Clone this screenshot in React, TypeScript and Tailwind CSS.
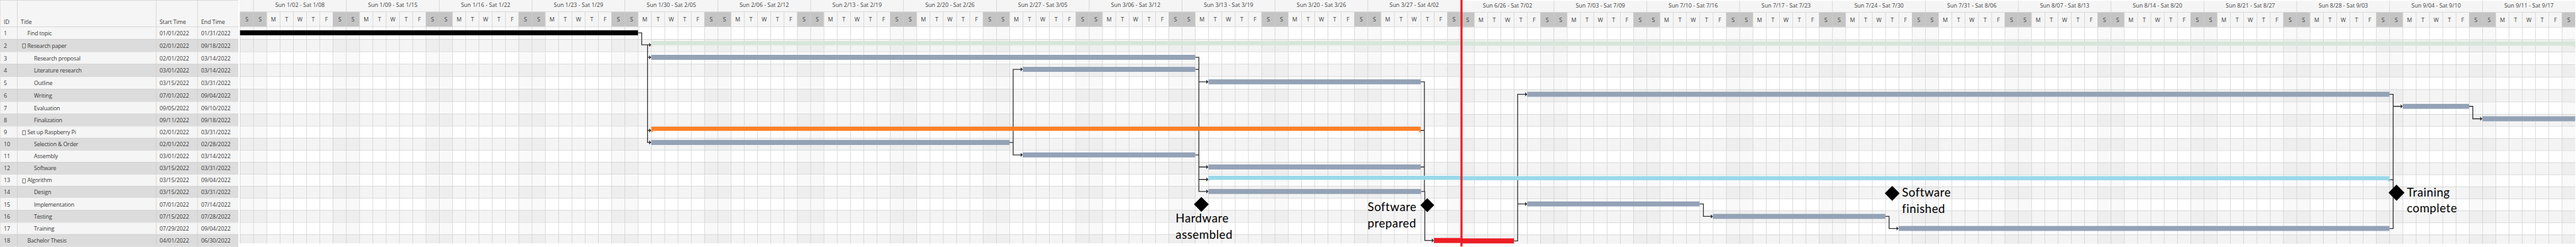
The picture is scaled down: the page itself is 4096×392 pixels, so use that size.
import React from "react";

type Task = { id: number; title: string; level: 1 | 2; group?: boolean; start: string; end: string };

const tasks: Task[] = [
  { id: 1, title: "Find topic", level: 1, start: "01/01/2022", end: "01/31/2022" },
  { id: 2, title: "Research paper", level: 1, group: true, start: "02/01/2022", end: "09/18/2022" },
  { id: 3, title: "Research proposal", level: 2, start: "02/01/2022", end: "03/14/2022" },
  { id: 4, title: "Literature research", level: 2, start: "03/01/2022", end: "03/14/2022" },
  { id: 5, title: "Outline", level: 2, start: "03/15/2022", end: "03/31/2022" },
  { id: 6, title: "Writing", level: 2, start: "07/01/2022", end: "09/04/2022" },
  { id: 7, title: "Evaluation", level: 2, start: "09/05/2022", end: "09/10/2022" },
  { id: 8, title: "Finalization", level: 2, start: "09/11/2022", end: "09/18/2022" },
  { id: 9, title: "Set up Raspberry Pi", level: 1, group: true, start: "02/01/2022", end: "03/31/2022" },
  { id: 10, title: "Selection & Order", level: 2, start: "02/01/2022", end: "02/28/2022" },
  { id: 11, title: "Assembly", level: 2, start: "03/01/2022", end: "03/14/2022" },
  { id: 12, title: "Software", level: 2, start: "03/15/2022", end: "03/31/2022" },
  { id: 13, title: "Algorithm", level: 1, group: true, start: "03/15/2022", end: "09/04/2022" },
  { id: 14, title: "Design", level: 2, start: "03/15/2022", end: "03/31/2022" },
  { id: 15, title: "Implementation", level: 2, start: "07/01/2022", end: "07/14/2022" },
  { id: 16, title: "Testing", level: 2, start: "07/15/2022", end: "07/28/2022" },
  { id: 17, title: "Training", level: 2, start: "07/29/2022", end: "09/04/2022" },
  { id: 18, title: "Bachelor Thesis", level: 1, start: "04/01/2022", end: "06/30/2022" },
];

const springWeeks = [
  "Sun 1/02 - Sat 1/08", "Sun 1/09 - Sat 1/15", "Sun 1/16 - Sat 1/22", "Sun 1/23 - Sat 1/29",
  "Sun 1/30 - Sat 2/05", "Sun 2/06 - Sat 2/12", "Sun 2/13 - Sat 2/19", "Sun 2/20 - Sat 2/26",
  "Sun 2/27 - Sat 3/05", "Sun 3/06 - Sat 3/12", "Sun 3/13 - Sat 3/19", "Sun 3/20 - Sat 3/26",
  "Sun 3/27 - Sat 4/02",
];

const summerWeeks = [
  "Sun 6/26 - Sat 7/02", "Sun 7/03 - Sat 7/09", "Sun 7/10 - Sat 7/16", "Sun 7/17 - Sat 7/23",
  "Sun 7/24 - Sat 7/30", "Sun 7/31 - Sat 8/06", "Sun 8/07 - Sat 8/13", "Sun 8/14 - Sat 8/20",
  "Sun 8/21 - Sat 8/27", "Sun 8/28 - Sat 9/03", "Sun 9/04 - Sat 9/10", "Sun 9/11 - Sat 9/17",
];

const WEEK = ["S", "M", "T", "W", "T", "F", "S"];

const rowHeight = (id: number) => (id < 8 ? "h-[30px]" : "h-[29px]");

function TaskTable() {
  return (
    <div className="flex w-[575px] shrink-0 flex-col border-l border-[#c8c8c8] text-[13.6px] leading-none text-[#3a3a3a]">
      <div className="flex h-[64px] items-end border-t border-[#c8c8c8] bg-[#f5f5f5]">
        <div className="flex h-full w-[40px] items-end pb-[5px] pl-[8px]">ID</div>
        <div className="flex h-full w-[335px] items-end border-l border-[#c8c8c8] pb-[5px] pl-[8px]">Title</div>
        <div className="flex h-full w-[100px] items-end border-l border-[#c8c8c8] pb-[5px] pl-[8px] tracking-[-0.15px]">Start Time</div>
        <div className="flex h-full w-[99px] items-end border-l border-[#c8c8c8] pb-[5px] pl-[8px] tracking-[-0.15px]">End Time</div>
      </div>
      {tasks.map((t) => (
        <div
          key={t.id}
          className={`flex ${rowHeight(t.id)} ${t.id === 15 ? "" : "border-t"} border-[#c8c8c8] ${
            t.id % 2 ? "bg-[#f5f5f5]" : "bg-[#dcdcdc]"
          }`}
        >
          <div className="flex w-[40px] items-center pl-[8px]">{t.id}</div>
          <div
            className={`flex w-[335px] items-center border-l border-[#c8c8c8] tracking-[-0.33px] ${
              t.group ? "pl-[12px]" : t.level === 1 ? "pl-[24px]" : "pl-[40px]"
            }`}
          >
            {t.group && <span className="mr-[4px] mt-[2px] h-[11px] w-[8px] border border-[#3a3a3a]" />}
            {t.title}
          </div>
          <div className="flex w-[100px] items-center border-l border-[#c8c8c8] pl-[8px] tracking-[-0.1px]">{t.start}</div>
          <div className="flex w-[99px] items-center border-l border-[#c8c8c8] pl-[8px] tracking-[-0.1px]">{t.end}</div>
        </div>
      ))}
      <div className="h-px bg-[#c8c8c8]" />
    </div>
  );
}

function Timeline({ weeks, leadIn, late }: { weeks: string[]; leadIn?: boolean; late?: boolean }) {
  const days = [...(leadIn ? ["S"] : []), ...weeks.flatMap(() => WEEK)];
  const weekend = (i: number) => {
    const d = leadIn ? i + 6 : i;
    return d % 7 === 0 || d % 7 === 6;
  };
  return (
    <div className={`flex shrink-0 flex-col text-[13.6px] leading-none text-[#444] ${late ? "pt-[2px]" : ""}`}>
      <div className={`flex bg-[#f5f5f5] ${late ? "h-[27px]" : "h-[28px]"}`}>
        {leadIn && <div className="w-[33px]" />}
        {weeks.map((w) => (
          <div
            key={w}
            className={`flex w-[224px] justify-center border-l border-[#c8c8c8] ${late ? "pt-[4px]" : "pt-[5px]"}`}
          >
            {w}
          </div>
        ))}
      </div>
      <div className="flex h-[36px] border-t border-[#c8c8c8] bg-[#f5f5f5]">
        {leadIn && <div className="w-px" />}
        {days.map((d, i) => (
          <div
            key={i}
            className={`flex w-[32px] items-center justify-center border-l border-[#c8c8c8] ${
              weekend(i) ? "bg-[#c4c4c4]" : ""
            }`}
          >
            {d}
          </div>
        ))}
      </div>
      {tasks.map((t) => (
        <div
          key={t.id}
          className={`flex border-t border-[#c8c8c8] ${t.id === 18 ? "h-[22px]" : rowHeight(t.id)} ${
            t.id % 2 ? "bg-white" : "bg-[#f4f4f4]"
          }`}
        >
          {leadIn && <div className="w-px" />}
          {days.map((_, i) => (
            <div
              key={i}
              className={`w-[32px] border-l border-[#c8c8c8] ${weekend(i) ? "bg-black/[0.022]" : ""}`}
            />
          ))}
        </div>
      ))}
    </div>
  );
}

const SLATE = "#94a2b6";

/* x1, x2, y, height, colour */
const bars: [number, number, number, number, string][] = [
  [579, 1539, 73, 12, "#000000"],
  [1571, 3523, 99, 10, "#d6e6da"],
  [3523, 6212, 100, 10, "#d6e6da"],
  [1571, 2883, 132, 12, SLATE],
  [2467, 2883, 161, 12, SLATE],
  [2915, 3427, 191, 12, SLATE],
  [3684, 5764, 221, 12, SLATE],
  [5796, 5956, 250, 12, SLATE],
  [5988, 6212, 280, 12, SLATE],
  [1571, 3427, 305, 10, "#ff7f27"],
  [1571, 2435, 337, 12, SLATE],
  [2467, 2883, 367, 12, SLATE],
  [2915, 3427, 396, 12, SLATE],
  [2915, 3523, 423, 10, "#99d9ea"],
  [3523, 5764, 424, 10, "#99d9ea"],
  [2915, 3428, 455, 12, SLATE],
  [3684, 4100, 485, 12, SLATE],
  [4132, 4548, 515, 12, SLATE],
  [4580, 5764, 544, 12, SLATE],
  [3459, 3523, 573, 12, "#ed1c24"],
  [3523, 3652, 574, 12, "#ed1c24"],
];

/* Pointed ends of the summary bars */
const hooks: [string, string][] = [
  ["M1571 109h5l-5 5z", "#d6e6da"],
  ["M6212 110h-6l6 5z", "#d6e6da"],
  ["M1571 315h5l-5 5z", "#ff7f27"],
  ["M3427 315h-5l5 5z", "#ff7f27"],
  ["M2915 433h5l-5 4z", "#99d9ea"],
  ["M5764 434h-5l5 5z", "#99d9ea"],
];

const links = [
  "M1539 79H1548V108H1567",
  "M1562 108V343H1567M1562 138H1567M1562 314H1567",
  "M2435 343H2444M2463 167H2444V373H2463",
  "M2883 138H2892V461H2911M2883 167H2892M2883 373H2892M2892 197H2911M2892 402H2911M2892 432H2911",
  "M3427 197H3436V461M3427 314H3436M3427 402H3436",
  "M3428 461H3437V579H3455",
  "M3652 580H3661V227H3680M3661 491H3680",
  "M4100 491H4109V521H4128",
  "M4548 521H4557V550H4576",
  "M5764 227H5773V550H5764M5764 433H5773M5773 256H5792",
  "M5956 256H5965V286H5984",
];

const arrows: [number, number][] = [
  [1571, 108], [1571, 138], [1571, 314], [1571, 343],
  [2467, 167], [2467, 373],
  [2915, 197], [2915, 402], [2915, 432], [2915, 461],
  [3459, 579], [3684, 227], [3684, 491],
  [4132, 521], [4580, 550], [5796, 256], [5988, 286],
];

const diamonds: [number, number, number][] = [
  [2898, 492, 16.5], [3443, 494, 15.5], [4564.5, 465.5, 16.5], [5781, 464, 18],
];

function ChartLayer() {
  return (
    <svg className="pointer-events-none absolute inset-0" width="6214" height="594" viewBox="0 0 6214 594">
      {links.map((d) => (
        <path key={d} d={d} fill="none" stroke="#2f2f2f" strokeWidth="2" />
      ))}
      {bars.map(([x1, x2, y, h, c], i) => (
        <rect key={i} x={x1} y={y} width={x2 - x1} height={h} fill={c} />
      ))}
      {hooks.map(([d, c]) => (
        <path key={d} d={d} fill={c} />
      ))}
      {arrows.map(([x, y]) => (
        <path key={`${x}-${y}`} d={`M${x - 5} ${y - 5}l5 5l-5 5z`} fill="#2f2f2f" />
      ))}
      {diamonds.map(([x, y, r]) => (
        <path
          key={x}
          d={`M${x} ${y - r}L${x + r} ${y}L${x} ${y + r}L${x - r} ${y}z`}
          fill="#000"
          stroke="#000"
          strokeWidth="2"
          strokeLinejoin="round"
        />
      ))}
      <rect x="3523" y="0" width="5" height="594" fill="#ed1c24" />
    </svg>
  );
}

function Milestone({ className, lines }: { className: string; lines: string[] }) {
  return (
    <div
      className={`absolute whitespace-nowrap font-['Lato',sans-serif] text-[28.5px] leading-[39px] tracking-[0.7px] text-black ${className}`}
    >
      {lines.map((l) => (
        <div key={l}>{l}</div>
      ))}
    </div>
  );
}

export default function App() {
  return (
    <div className="h-[392px] w-[4096px] overflow-hidden bg-white">
      <div className="relative flex h-[594px] w-[6214px] origin-top-left scale-[0.659157] items-start gap-[3px] font-['Open_Sans','Noto_Sans',sans-serif]">
        <TaskTable />
        <div className="flex items-start gap-px">
          <Timeline weeks={springWeeks} leadIn />
          <Timeline weeks={summerWeeks} late />
        </div>
        <ChartLayer />
        <Milestone className="left-[2836px] top-[506px]" lines={["Hardware", "assembled"]} />
        <Milestone className="left-[3299px] top-[478px]" lines={["Software", "prepared"]} />
        <Milestone className="left-[4588px] top-[444px]" lines={["Software", "finished"]} />
        <Milestone className="left-[5806px] top-[443px]" lines={["Training", "complete"]} />
      </div>
    </div>
  );
}
